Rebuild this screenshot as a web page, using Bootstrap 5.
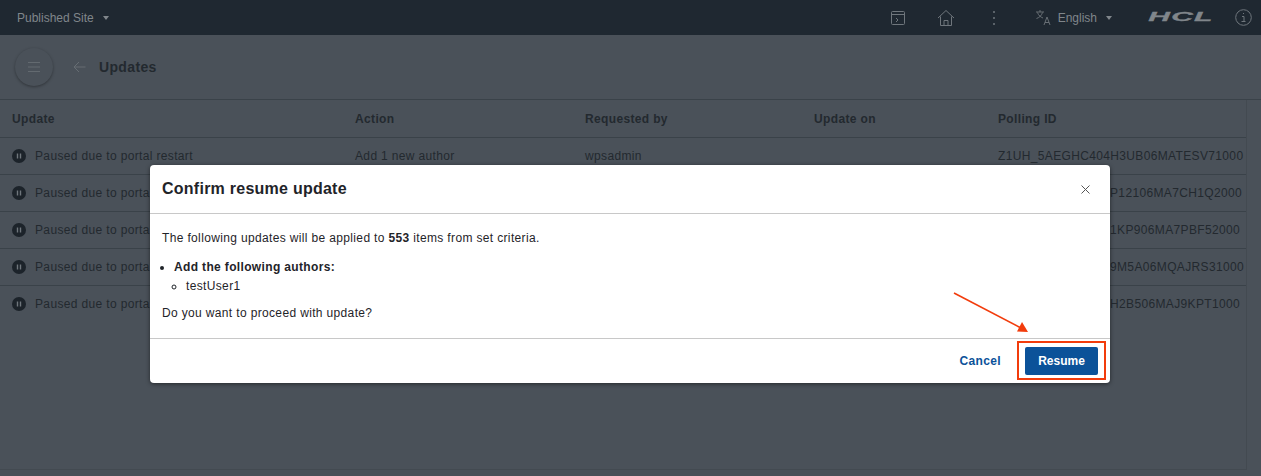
<!DOCTYPE html>
<html lang="en">
<head>
    <meta charset="UTF-8">
    <meta name="viewport" content="width=device-width, initial-scale=1">
    <title>Updates</title>
    <link href="https://cdn.jsdelivr.net/npm/bootstrap@5.3.0/dist/css/bootstrap.min.css" rel="stylesheet">
    <script src="https://cdn.jsdelivr.net/npm/bootstrap@5.3.0/dist/js/bootstrap.bundle.min.js"></script>
    <style>
        html, body { height: 476px; overflow: hidden; }
        body {
            position: relative;
            background: #4a5159;
            color: #23292f;
            font-family: "Liberation Sans", Arial, sans-serif;
            font-size: 12px;
            letter-spacing: .35px;
        }

        /* top bar */
        .top-bar { height: 35px; background: #1f2831; color: #80868b; padding-left: 17px; letter-spacing: 0; }
        .top-caret { width: 0; height: 0; border: 3.5px solid transparent; border-top: 4px solid #80868b; border-bottom: 0; }
        .top-icon { display: block; color: #6f767c; }
        .hcl-logo {
            width: 64px; text-align: center; color: #80868b;
            font-size: 12.500px; font-weight: 700; font-style: italic; line-height: 1;
            letter-spacing: .5px; transform: scaleX(2.4);
            -webkit-text-stroke: .3px #80868b;
        }

        /* page title */
        .title-bar { height: 65px; border-bottom: 1px solid #3a4249; padding-left: 15px; }
        .menu-round {
            width: 38px; height: 38px; border-radius: 50%; background: #4a5159;
            box-shadow: 0 1px 3px rgba(0, 0, 0, .35);
        }
        .page-name { font-size: 14px; font-weight: 700; margin-left: 13px; }

        /* updates table */
        .table-area { width: 1247px; height: 370px; border-right: 1px solid #434a51; border-bottom: 1px solid #434a51; }
        .updates-table { table-layout: fixed; width: 1246px; margin: 0; --bs-table-bg: transparent; --bs-table-color: #23292f; }
        .updates-table th, .updates-table td {
            height: 37px; padding: 0 0 0 12px; vertical-align: middle;
            border-bottom: 1px solid #3a4249; white-space: nowrap; overflow: hidden;
        }
        .updates-table th { font-weight: 700; padding-top: 2px; }
        .updates-table tr:last-child td { border-bottom: 0; }
        .pause-icon { width: 14px; height: 14px; margin-right: 9px; vertical-align: -3px; }
        .updates-table td.cut-id { padding-left: 124px; }

        /* confirm dialog */
        .confirm-box {
            position: absolute; top: 165px; left: 150px; width: 960px; height: 218px;
            background: #fff; border: 0; border-radius: 4px; color: #1f2429;
            box-shadow: 0 1px 4px rgba(0, 0, 0, .5);
        }
        .confirm-box .modal-header { height: 49px; padding: 0 20px 0 12px; border-bottom: 1px solid #c8c8c8; }
        .confirm-box .modal-title { font-size: 16px; font-weight: 700; letter-spacing: .25px; }
        .confirm-box .modal-body { padding: 17px 12px 0; line-height: 15px; }
        .confirm-box .modal-footer { height: 45px; padding: 0 12px 0 0; border-top: 1px solid #c8c8c8; flex-wrap: nowrap; }
        .body-line { margin-bottom: 14px; }
        .author-list { padding-left: 12px; margin-bottom: 12px; }
        .author-list ul { padding-left: 12px; margin: 4px 0 0; }
        .cancel-link { color: #0b5299; font-size: 12px; font-weight: 700; text-decoration: none; padding: 0; margin-right: 24px; }
        .resume-btn {
            width: 73px; height: 28px; padding: 0; margin: 0; border-radius: 2px; border: 0;
            background: #0b5299; color: #fff; font-size: 12px; font-weight: 700;
        }
        .close-x { background: none; border: 0; padding: 0; color: #555; line-height: 0; }

        /* annotation drawn over the dialog */
        .note-layer { position: absolute; top: 0; left: 0; pointer-events: none; }
    </style>
</head>

<body>
    <div class="top-bar d-flex align-items-center">
        <span>Published Site</span>
        <span class="top-caret" style="margin-left:9px"></span>
        <div class="ms-auto d-flex align-items-center">
            <svg class="top-icon" width="16" height="16" viewBox="0 0 16 16" fill="none" stroke="currentColor"><rect x="1.500" y="1.500" width="13" height="13" rx="1"/><path d="M1.500 4.500h13M6 8l2 2-2 2"/></svg>
            <svg class="top-icon" style="margin-left:31px" width="18" height="18" viewBox="0 0 18 18" fill="none" stroke="currentColor"><path d="M1 9 9 1.500 17 9M3.500 7.500v9h11v-9M7 16.500v-5h4v5"/></svg>
            <svg class="top-icon" style="margin-left:37px" width="4" height="16" viewBox="0 0 4 16" fill="currentColor"><circle cx="2" cy="2" r="1"/><circle cx="2" cy="8" r="1"/><circle cx="2" cy="14" r="1"/></svg>
            <svg class="top-icon" style="margin-left:39px" width="17" height="17" viewBox="0 0 17 17" fill="none" stroke="currentColor" stroke-width=".9"><path d="M1 3h8M5 1v2M2.500 3.500C3.500 6.500 5.500 8 8 9M7.500 3.500C6.500 6.500 4.500 8.500 1.500 9.500M9 16l3-8 3 8M10 13.500h4"/></svg>
            <span style="margin-left:6px">English</span>
            <span class="top-caret" style="margin-left:9px"></span>
            <div class="hcl-logo" style="margin-left:37px">HCL</div>
            <svg class="top-icon" style="margin-left:22px;margin-right:9px" width="17" height="17" viewBox="0 0 17 17" fill="none" stroke="currentColor"><circle cx="8.500" cy="8.500" r="7.800"/><path d="M7 7.500h2v5M6.500 12.500h4M8 4.500h1"/></svg>
        </div>
    </div>

    <div class="title-bar d-flex align-items-center">
        <div class="menu-round d-flex align-items-center justify-content-center">
            <svg width="14" height="12" viewBox="0 0 14 12" stroke="#636a70" fill="none"><path d="M1 1.500h12M1 6h12M1 10.500h12"/></svg>
        </div>
        <svg style="margin-left:20px" width="13" height="12" viewBox="0 0 13 12" stroke="#666d73" fill="none"><path d="M12.500 6H1M6 1 1 6l5 5"/></svg>
        <div class="page-name">Updates</div>
    </div>

    <div class="table-area">
        <table class="table updates-table">
            <colgroup>
                <col style="width:343px"><col style="width:230px"><col style="width:229px"><col style="width:184px"><col>
            </colgroup>
            <thead>
                <tr><th>Update</th><th>Action</th><th>Requested by</th><th>Update on</th><th>Polling ID</th></tr>
            </thead>
            <tbody id="rows"></tbody>
        </table>
    </div>

    <div class="modal-content confirm-box">
        <div class="modal-header">
            <h5 class="modal-title">Confirm resume update</h5>
            <button type="button" class="close-x ms-auto" aria-label="Close">
                <svg width="9" height="9" viewBox="0 0 9 9" stroke="currentColor" fill="none"><path d="M.5.500l8 8M8.500.500l-8 8"/></svg>
            </button>
        </div>
        <div class="modal-body">
            <p class="body-line">The following updates will be applied to <b>553</b> items from set criteria.</p>
            <ul class="author-list">
                <li><b>Add the following authors:</b>
                    <ul><li>testUser1</li></ul>
                </li>
            </ul>
            <p class="mb-0">Do you want to proceed with update?</p>
        </div>
        <div class="modal-footer justify-content-end">
            <a href="#" class="cancel-link">Cancel</a>
            <button type="button" class="btn btn-primary resume-btn">Resume</button>
        </div>
    </div>

    <svg class="note-layer" width="1261" height="476" viewBox="0 0 1261 476" fill="none">
        <rect x="1018" y="342" width="87" height="37" stroke="#f23c0c" stroke-width="2"/>
        <path d="M954 293 1020 327.500" stroke="#f23c0c" stroke-width="1.600"/>
        <path d="M1028 332 1017 331.500 1022 322z" fill="#f23c0c"/>
    </svg>

    <script>
        const pauseSvg = '<svg class="pause-icon" viewBox="0 0 14 14"><circle cx="7" cy="7" r="7" fill="#1c232a"/><path d="M5.500 4.500v5M8.500 4.500v5" stroke="#6f767c" stroke-width="1.400"/></svg>';
        // what is readable of each polling id, the dialog covers the rest
        const hiddenRows = ["P12106MA7CH1Q2000", "1KP906MA7PBF52000", "9M5A06MQAJRS31000", "H2B506MAJ9KPT1000"];
        const firstRow = `<tr><td>${pauseSvg}Paused due to portal restart</td><td>Add 1 new author</td><td>wpsadmin</td><td></td><td>Z1UH_5AEGHC404H3UB06MATESV71000</td></tr>`;
        document.getElementById("rows").innerHTML = firstRow + hiddenRows.map(id =>
            `<tr><td>${pauseSvg}Paused due to porta</td><td></td><td></td><td></td><td class="cut-id">${id}</td></tr>`
        ).join("");
    </script>
</body>
</html>
